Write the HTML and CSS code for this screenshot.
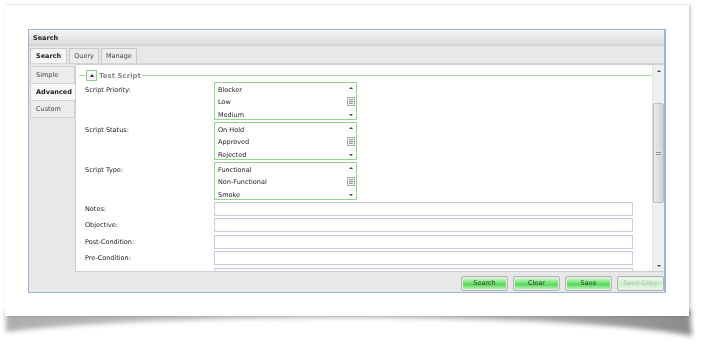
FILE: index.html
```html
<!DOCTYPE html>
<html lang="en">
<head>
    <meta charset="UTF-8">
    <title>Search</title>
    <link rel="stylesheet" href="styles.css">
</head>
<body>
    <div class="page">
        <div class="card">
            <div class="window">
                <div class="titlebar">Search</div>
                <div class="tabs">
                    <span class="tab active">Search</span>
                    <span class="tab">Query</span>
                    <span class="tab">Manage</span>
                </div>
                <div class="main">
                    <div class="sidenav">
                        <div class="side-item">Simple</div>
                        <div class="side-item active">Advanced</div>
                        <div class="side-item">Custom</div>
                    </div>
                    <div class="content">
                        <div class="scroll-area">
                            <div class="legend">
                                <span class="legend-line short"></span>
                                <span class="collapse"><span class="arrow-up"></span></span>
                                <span class="legend-text">Test Script</span>
                                <span class="legend-line"></span>
                            </div>

                            <div class="row list-row">
                                <label>Script Priority:</label>
                                <div class="listbox">
                                    <div class="options">
                                        <div>Blocker</div>
                                        <div>Low</div>
                                        <div>Medium</div>
                                    </div>
                                    <div class="mini-scroll">
                                        <span class="mini-up"></span>
                                        <span class="mini-thumb"></span>
                                        <span class="mini-down"></span>
                                    </div>
                                </div>
                            </div>

                            <div class="row list-row">
                                <label>Script Status:</label>
                                <div class="listbox">
                                    <div class="options">
                                        <div>On Hold</div>
                                        <div>Approved</div>
                                        <div>Rejected</div>
                                    </div>
                                    <div class="mini-scroll">
                                        <span class="mini-up"></span>
                                        <span class="mini-thumb"></span>
                                        <span class="mini-down"></span>
                                    </div>
                                </div>
                            </div>

                            <div class="row list-row">
                                <label>Script Type:</label>
                                <div class="listbox">
                                    <div class="options">
                                        <div>Functional</div>
                                        <div>Non-Functional</div>
                                        <div>Smoke</div>
                                    </div>
                                    <div class="mini-scroll">
                                        <span class="mini-up"></span>
                                        <span class="mini-thumb"></span>
                                        <span class="mini-down"></span>
                                    </div>
                                </div>
                            </div>

                            <div class="row first-input"><label>Notes:</label><input type="text"></div>
                            <div class="row"><label>Objective:</label><input type="text"></div>
                            <div class="row"><label>Post-Condition:</label><input type="text"></div>
                            <div class="row"><label>Pre-Condition:</label><input type="text"></div>
                            <div class="row"><label></label><input type="text"></div>
                        </div>
                        <div class="vscroll">
                            <span class="v-up"></span>
                            <div class="v-track">
                                <span class="v-thumb"><span class="grip"></span></span>
                            </div>
                            <span class="v-down"></span>
                        </div>
                    </div>
                </div>
                <div class="toolbar">
                    <button class="btn">Search</button>
                    <button class="btn">Clear</button>
                    <button class="btn">Save</button>
                    <button class="btn" disabled>Save Copy</button>
                </div>
            </div>
        </div>
        <svg class="paper-shadow" width="694" height="34" viewBox="0 0 694 34">
            <defs>
                <filter id="soft" x="-5%" y="-50%" width="110%" height="200%">
                    <feGaussianBlur stdDeviation="2.5"/>
                </filter>
                <linearGradient id="shade" x1="0" x2="1" y1="0" y2="0">
                    <stop offset="0" stop-color="#000" stop-opacity="0.32"/>
                    <stop offset="0.5" stop-color="#000" stop-opacity="0.22"/>
                    <stop offset="1" stop-color="#000" stop-opacity="0.45"/>
                </linearGradient>
            </defs>
            <path d="M5,2 L689,2 L691,28 C610,13 470,10 346,10 C230,10 90,13 5,24 Z" fill="url(#shade)" filter="url(#soft)"/>
        </svg>
    </div>
</body>
</html>
```

FILE: styles.css
```css
body {
    margin: 0;
    background: #fff;
    font-family: "DejaVu Sans", Verdana, sans-serif;
    font-size: 6.5px;
    color: #222;
}

.page {
    padding: 5px 0 0 5px;
    will-change: transform;
}

.card {
    position: relative;
    z-index: 1;
    width: 684px;
    height: 311px;
    background: #fff;
    box-shadow: 2px 0 3px rgba(0, 0, 0, 0.18), 0 0 2px rgba(0, 0, 0, 0.08);
    padding: 24px 0 0 23px;
    box-sizing: border-box;
}

.paper-shadow {
    display: block;
    margin: -8px 0 0 -4px;
}

.window {
    width: 638px;
    height: 264px;
    box-sizing: border-box;
    border: 1px solid #9cb6d8;
    border-right-width: 2px;
    background: #e8e8e8;
    display: flex;
    flex-direction: column;
}

.titlebar {
    height: 15px;
    line-height: 17px;
    padding-left: 4px;
    font-weight: bold;
    color: #222;
    background: linear-gradient(#f4f4f4, #dadada);
    border-bottom: 1px solid #d0d0d0;
}

.tabs {
    height: 17px;
    display: flex;
    align-items: flex-end;
    padding-left: 1px;
    gap: 2px;
    border-bottom: 1px solid #d4d4d4;
}

.tab {
    height: 14px;
    line-height: 14px;
    padding: 0 4px;
    border: 1px solid #c8c8c8;
    border-bottom: none;
    background: #ececec;
    color: #444;
}

.tab.active {
    background: #f6f6f6;
    font-weight: bold;
    color: #222;
    padding: 0 5px;
}

.main {
    flex: 1;
    min-height: 0;
    display: flex;
}

.sidenav {
    width: 46px;
    padding-top: 2px;
}

.side-item {
    height: 16px;
    line-height: 16px;
    padding-left: 5px;
    margin-left: 1px;
    border: 1px solid #d2d2d2;
    border-top: none;
    background: #ececec;
    color: #444;
}

.side-item:first-child {
    border-top: 1px solid #d2d2d2;
}

.side-item.active {
    background: #f8f8f8;
    font-weight: bold;
    color: #222;
    border-right: none;
}

.content {
    flex: 1;
    min-height: 0;
    display: flex;
    background: #fff;
    border: 1px solid #cfcfcf;
    border-right: none;
    overflow: hidden;
}

.scroll-area {
    flex: 1;
    padding: 5px 19px 0 3px;
    overflow: hidden;
}

.legend {
    display: flex;
    align-items: center;
    height: 11px;
    margin-bottom: 1px;
}

.legend-line {
    flex: 1;
    height: 1px;
    background: #9edc9e;
    margin-right: -19px;
}

.legend-line.short {
    flex: 0 0 6px;
    margin-right: 1px;
}

.collapse {
    width: 9px;
    height: 9px;
    border: 1px solid #8cd48c;
    display: flex;
    align-items: center;
    justify-content: center;
    background: #f6f6f6;
}

.arrow-up {
    width: 0;
    height: 0;
    border-left: 2.5px solid transparent;
    border-right: 2.5px solid transparent;
    border-bottom: 3px solid #333;
}

.legend-text {
    color: #888;
    font-weight: bold;
    padding: 0 1px 0 2px;
    font-size: 7px;
}

.row {
    display: flex;
    align-items: center;
    padding-left: 6px;
    margin-bottom: 2.4px;
}

.row label {
    width: 129px;
    flex-shrink: 0;
}

.list-row {
    align-items: flex-start;
    margin-bottom: 2px;
}

.list-row label {
    padding-top: 4px;
}

.first-input {
    margin-top: 1px;
}

.listbox {
    width: 143px;
    height: 38px;
    box-sizing: border-box;
    border: 1px solid #8fd88f;
    display: flex;
    background: #fff;
}

.options {
    flex: 1;
    padding: 1px 3px 0;
}

.options div {
    height: 12.4px;
    line-height: 12.4px;
    color: #222;
}

.mini-scroll {
    width: 10px;
    display: flex;
    flex-direction: column;
    align-items: center;
    justify-content: space-between;
    padding: 4px 0 3px;
}

.mini-up,
.v-up {
    width: 0;
    height: 0;
    border-left: 2px solid transparent;
    border-right: 2px solid transparent;
    border-bottom: 2px solid #444;
}

.mini-down,
.v-down {
    width: 0;
    height: 0;
    border-left: 2px solid transparent;
    border-right: 2px solid transparent;
    border-top: 2px solid #444;
}

.mini-thumb {
    width: 8px;
    height: 9px;
    box-sizing: border-box;
    border: 1px solid #a8a8a8;
    background: repeating-linear-gradient(#e6e6e6 0 1px, #9a9a9a 1px 2px);
    background-clip: content-box;
    padding: 1px 1px;
}

.row input {
    width: 420px;
    height: 14px;
    box-sizing: border-box;
    border: 1px solid #cbcbdb;
    box-shadow: inset 0 1px 2px rgba(0, 0, 0, 0.05);
    padding: 0;
    margin: 0;
}

.vscroll {
    width: 11px;
    display: flex;
    flex-direction: column;
    align-items: center;
    background: #efefef;
    border-left: 1px solid #e2e2e2;
}

.v-up {
    margin-top: 5px;
}

.v-track {
    flex: 1;
    width: 100%;
    padding-top: 31px;
}

.v-thumb {
    display: flex;
    align-items: center;
    justify-content: center;
    height: 100px;
    box-sizing: border-box;
    border: 1px solid #bdbdbd;
    border-radius: 2px;
    background: linear-gradient(90deg, #eaeaea, #d2d2d2);
}

.grip {
    width: 5px;
    height: 5px;
    background: repeating-linear-gradient(#e8e8e8 0 1px, #909090 1px 2px);
}

.v-down {
    margin-bottom: 4px;
}

.toolbar {
    height: 20px;
    flex-shrink: 0;
    box-sizing: border-box;
    padding-top: 2px;
    display: flex;
    justify-content: flex-end;
    align-items: center;
    gap: 5px;
}

.btn {
    width: 47px;
    height: 15px;
    border: 1px solid #b4b4b4;
    border-radius: 2px;
    padding: 1px;
    font-family: inherit;
    font-size: 6.5px;
    color: #333;
    background-color: #f2f2f2;
    background-image: linear-gradient(#d4f6d4 0%, #6ee46e 45%, #5ad85a 60%, #b4eeb4 100%);
    background-origin: content-box;
    background-clip: content-box;
}

.btn:disabled {
    background-image: linear-gradient(#eefbee, #c4efc4 50%, #e4f8e4);
    color: #bdbdbd;
}
```
